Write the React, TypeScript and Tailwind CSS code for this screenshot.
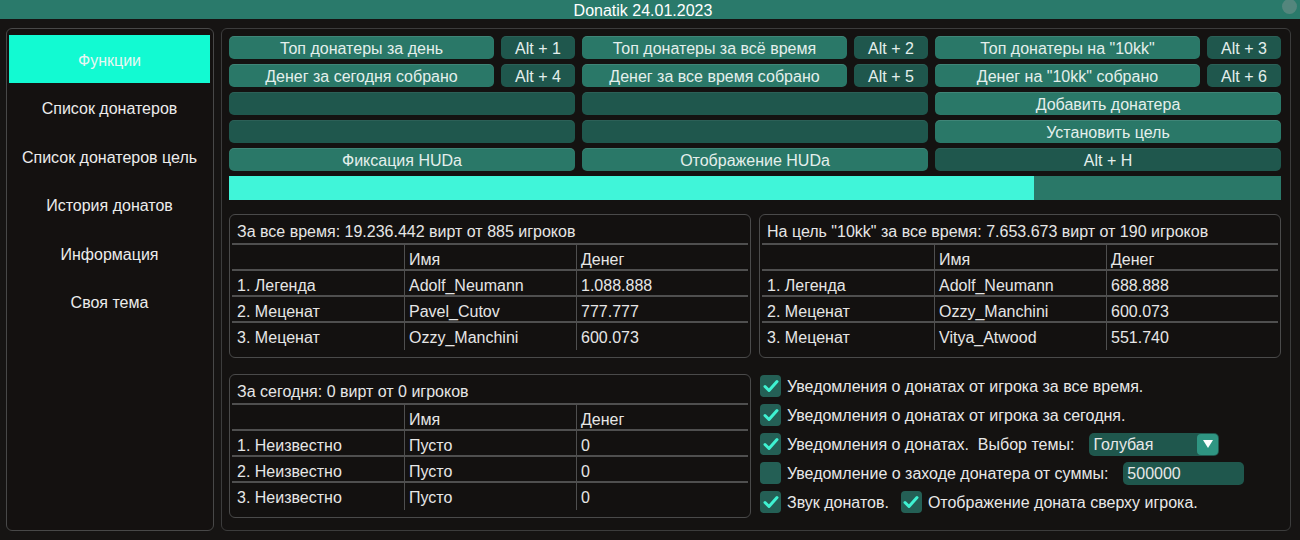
import React from "react";

const font = { fontFamily: '"Liberation Sans", Arial, sans-serif' };

function Btn({ children, dark, className = "" }: { children?: React.ReactNode; dark?: boolean; className?: string }) {
  return (
    <div
      className={`h-[23px] rounded-[5px] flex items-center justify-center pt-[2px] text-[16px] text-[#e4efec] leading-none ${
        dark ? "bg-[#1f574d] shadow-[inset_0_1px_0_rgba(255,255,255,0.06)]" : "bg-[#2a7868] shadow-[inset_0_1px_0_rgba(255,255,255,0.10)]"
      } ${className}`}
    >
      {children}
    </div>
  );
}

function Pair({ label, alt }: { label: string; alt: string }) {
  return (
    <div className="flex gap-[7px]">
      <Btn className="flex-1">{label}</Btn>
      <Btn dark className="w-[74px]">{alt}</Btn>
    </div>
  );
}

function Table({ title, rows }: { title: string; rows: [string, string, string][] }) {
  const all: [string, string, string][] = [["", "Имя", "Денег"], ...rows];
  return (
    <div className="h-[144px] rounded-[6px] border border-[#4a4a4a] px-[2px] pt-[1px] text-[16px] text-[#e6e6e6] bg-[#131110]">
      <div className="h-[29px] flex items-center pl-[5px] pt-[5px] border-b-2 border-[#4f4f4f]">{title}</div>
      {all.map((r, i) => (
        <div
          key={i}
          className={`grid grid-cols-3 h-[26px] ${i < all.length - 1 ? "border-b-2 border-[#4f4f4f]" : ""}`}
        >
          <div className="flex items-center pl-[5px] pt-[3px]">{r[0]}</div>
          <div className="flex items-center pl-[4px] pt-[3px] border-l border-[#4f4f4f]">{r[1]}</div>
          <div className="flex items-center pl-[4px] pt-[3px] border-l border-[#4f4f4f]">{r[2]}</div>
        </div>
      ))}
    </div>
  );
}

function Check({ on }: { on: boolean }) {
  return (
    <div className="w-[21px] h-[22px] rounded-[4px] bg-[#245f55] flex items-center justify-center shrink-0">
      {on && (
        <svg width="16" height="14" viewBox="0 0 16 14">
          <polyline points="2,7.5 6,11.5 14,2.5" fill="none" stroke="#3ff2d2" strokeWidth="3" strokeLinecap="round" strokeLinejoin="round" />
        </svg>
      )}
    </div>
  );
}

export default function App() {
  const side = ["Список донатеров", "Список донатеров цель", "История донатов", "Информация", "Своя тема"];
  return (
    <div className="w-[1300px] h-[540px] bg-[#161413] flex flex-col overflow-hidden relative" style={font}>
      <div className="h-[19px] bg-[#2a7a6b] flex items-center justify-center pt-[3px] pr-[14px] text-[16px] text-white leading-none shrink-0">
        Donatik 24.01.2023
      </div>
      <div className="absolute right-[3px] top-[-1px] w-[15px] h-[15px] rounded-full bg-[#5f8a82] opacity-80" />
      <div className="flex gap-[7px] pl-[6px] pt-[9px]">
        {/* Sidebar */}
        <div className="w-[208px] h-[503px] rounded-[6px] border border-[#484848] bg-[#141110] pl-[2px] pr-[3px] pt-[6px] flex flex-col">
          <div className="h-[48px] bg-[#12fad2] flex items-center justify-center pt-[3px] text-[16px] text-[#e8f7f3]">Функции</div>
          {side.map((s) => (
            <div key={s} className="h-[48.5px] flex items-center justify-center pt-[4px] text-[16px] text-[#ececec]">
              {s}
            </div>
          ))}
        </div>
        {/* Main */}
        <div className="w-[1070px] h-[503px] rounded-[6px] border border-[#3c3c3c] bg-[#141211] pl-[7px] pr-[9px] pt-[7px]">
          <div className="grid grid-cols-3 gap-x-[7px] gap-y-[5px]">
            <Pair label="Топ донатеры за день" alt="Alt + 1" />
            <Pair label="Топ донатеры за всё время" alt="Alt + 2" />
            <Pair label='Топ донатеры на "10kk"' alt="Alt + 3" />
            <Pair label="Денег за сегодня собрано" alt="Alt + 4" />
            <Pair label="Денег за все время собрано" alt="Alt + 5" />
            <Pair label='Денег на "10kk" собрано' alt="Alt + 6" />
            <Btn dark />
            <Btn dark />
            <Btn>Добавить донатера</Btn>
            <Btn dark />
            <Btn dark />
            <Btn>Установить цель</Btn>
            <Btn>Фиксация HUDa</Btn>
            <Btn>Отображение HUDa</Btn>
            <Btn dark>Alt + H</Btn>
          </div>
          <div className="mt-[5px] h-[24px] bg-[#2a7868] flex">
            <div className="w-[805px] bg-[#40f5d9]" />
          </div>
          <div className="mt-[14px] grid grid-cols-2 gap-x-[8px]">
            <div className="flex flex-col gap-[16px]">
              <Table
                title="За все время: 19.236.442 вирт от 885 игроков"
                rows={[
                  ["1. Легенда", "Adolf_Neumann", "1.088.888"],
                  ["2. Меценат", "Pavel_Cutov", "777.777"],
                  ["3. Меценат", "Ozzy_Manchini", "600.073"],
                ]}
              />
              <Table
                title="За сегодня: 0 вирт от 0 игроков"
                rows={[
                  ["1. Неизвестно", "Пусто", "0"],
                  ["2. Неизвестно", "Пусто", "0"],
                  ["3. Неизвестно", "Пусто", "0"],
                ]}
              />
            </div>
            <div className="flex flex-col">
              <Table
                title='На цель "10kk" за все время: 7.653.673 вирт от 190 игроков'
                rows={[
                  ["1. Легенда", "Adolf_Neumann", "688.888"],
                  ["2. Меценат", "Ozzy_Manchini", "600.073"],
                  ["3. Меценат", "Vitya_Atwood", "551.740"],
                ]}
              />
              <div className="mt-[17px] flex flex-col gap-[7px] text-[16px] text-[#e8e8e8] pl-[1px]">
                <div className="h-[22px] flex items-center gap-[6px]">
                  <Check on />
                  <span className="pt-[2px]">Уведомления о донатах от игрока за все время.</span>
                </div>
                <div className="h-[22px] flex items-center gap-[6px]">
                  <Check on />
                  <span className="pt-[2px]">Уведомления о донатах от игрока за сегодня.</span>
                </div>
                <div className="h-[22px] flex items-center gap-[6px]">
                  <Check on />
                  <span className="pt-[2px] whitespace-pre">Уведомления о донатах.  Выбор темы:</span>
                  <div className="ml-[9px] w-[130px] h-[23px] rounded-[5px] bg-[#1f574d] flex items-center pl-[4px] pr-[1px]">
                    <span className="flex-1 pt-[2px]">Голубая</span>
                    <div className="w-[21px] h-[21px] rounded-[4px] bg-[#2f9582] flex items-center justify-center">
                      <svg width="12" height="10" viewBox="0 0 12 10">
                        <polygon points="1,1 11,1 6,9" fill="#ffffff" />
                      </svg>
                    </div>
                  </div>
                </div>
                <div className="h-[22px] flex items-center gap-[6px]">
                  <Check on={false} />
                  <span className="pt-[2px]">Уведомление о заходе донатера от суммы:</span>
                  <div className="ml-[9px] w-[121px] h-[23px] rounded-[5px] bg-[#1f574d] flex items-center pl-[4px] pt-[2px]">500000</div>
                </div>
                <div className="h-[22px] flex items-center gap-[6px]">
                  <Check on />
                  <span className="pt-[2px]">Звук донатов.</span>
                  <div className="ml-[6px]">
                    <Check on />
                  </div>
                  <span className="pt-[2px]">Отображение доната сверху игрока.</span>
                </div>
              </div>
            </div>
          </div>
        </div>
      </div>
    </div>
  );
}
